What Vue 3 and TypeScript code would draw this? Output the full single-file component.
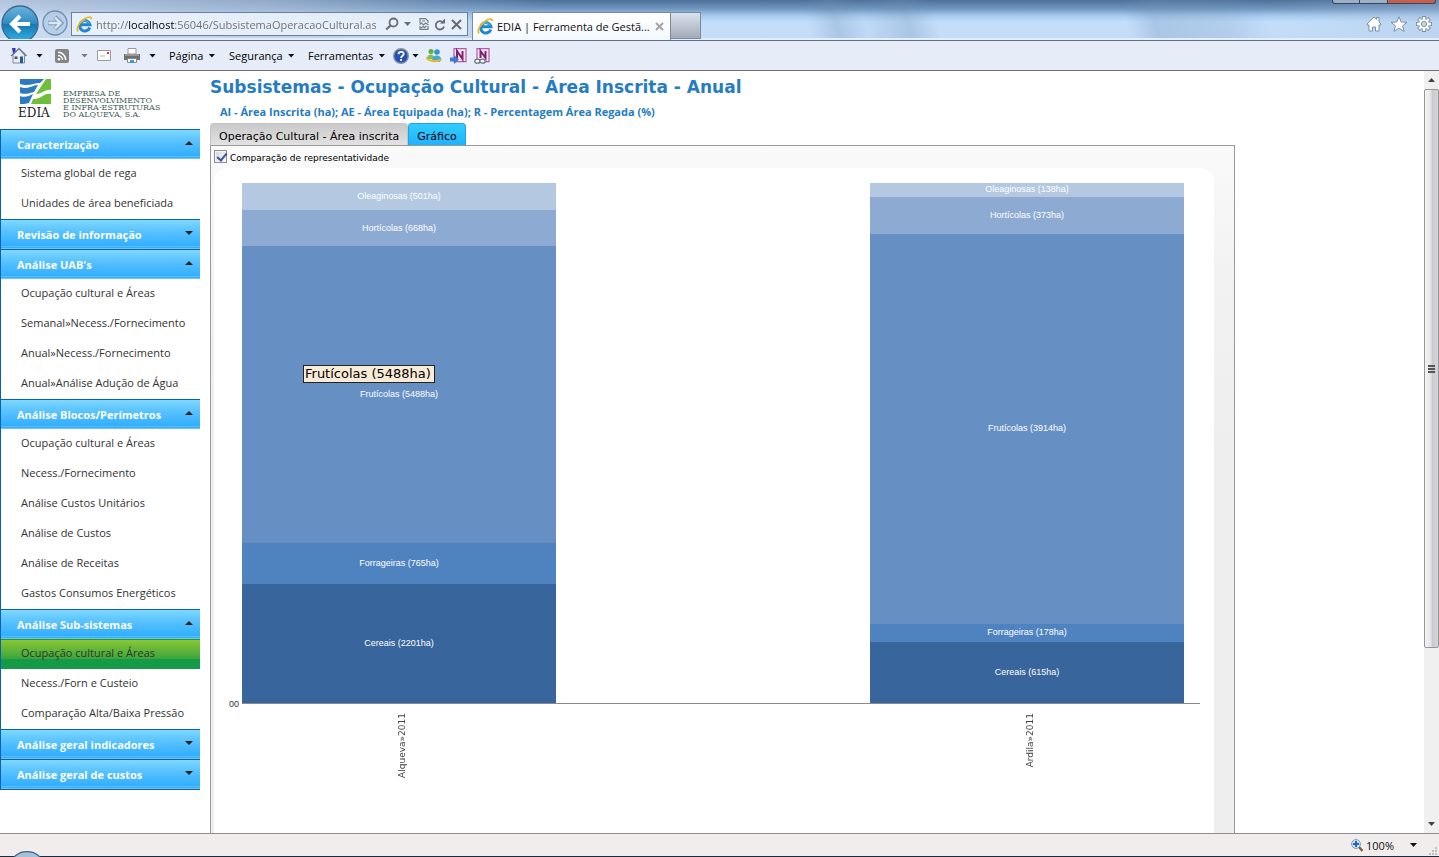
<script setup lang="ts">
import { ref } from 'vue'

interface Group { title: string; open: boolean; items: string[] }
interface Segment { name: string; area: number; tone: string }
interface Bar { label: string; segments: Segment[] }

const address = ref('http://localhost:56046/SubsistemaOperacaoCultural.aspx')
const compare = ref(true)
const activeGroup = 'Análise Sub-sistemas'
const activeItem = 'Ocupação cultural e Áreas'

const groups = ref<Group[]>([
  { title: 'Caracterização', open: true, items: ['Sistema global de rega', 'Unidades de área beneficiada'] },
  { title: 'Revisão de informação', open: false, items: [] },
  {
    title: "Análise UAB's",
    open: true,
    items: ['Ocupação cultural e Áreas', 'Semanal»Necess./Fornecimento', 'Anual»Necess./Fornecimento', 'Anual»Análise Adução de Água'],
  },
  {
    title: 'Análise Blocos/Perímetros',
    open: true,
    items: ['Ocupação cultural e Áreas', 'Necess./Fornecimento', 'Análise Custos Unitários', 'Análise de Custos', 'Análise de Receitas', 'Gastos Consumos Energéticos'],
  },
  { title: 'Análise Sub-sistemas', open: true, items: ['Ocupação cultural e Áreas', 'Necess./Forn e Custeio', 'Comparação Alta/Baixa Pressão'] },
  { title: 'Análise geral indicadores', open: false, items: [] },
  { title: 'Análise geral de custos', open: false, items: [] },
])

const crops = ['Oleaginosas', 'Hortícolas', 'Frutícolas', 'Forrageiras', 'Cereais']
const makeBar = (label: string, areas: number[]): Bar => ({
  label,
  segments: areas.map((area, i) => ({ name: crops[i], area, tone: 'tone' + i })),
})
const bars: Bar[] = [
  makeBar('Alqueva»2011', [501, 668, 5488, 765, 2201]),
  makeBar('Ardila»2011', [138, 373, 3914, 178, 615]),
]
</script>

<template>
  <div class="window">
    <header class="glass">
      <button class="back" aria-label="Retroceder">
        <svg width="38" height="38" viewBox="0 0 38 38">
          <defs>
            <linearGradient id="backFill" x1="0" y1="0" x2="0" y2="1">
              <stop offset="0" stop-color="#6fb4dc" />
              <stop offset=".48" stop-color="#2e8cc4" />
              <stop offset=".52" stop-color="#1579b5" />
              <stop offset="1" stop-color="#35b4e6" />
            </linearGradient>
          </defs>
          <circle cx="19" cy="19" r="18" fill="url(#backFill)" stroke="#3d6a90" stroke-width="1.4" />
          <path d="M29 19H11M19 11l-8 8 8 8" fill="none" stroke="#fff" stroke-width="4" />
        </svg>
      </button>
      <button class="forward" aria-label="Avançar">
        <svg width="26" height="26" viewBox="0 0 26 26">
          <circle cx="13" cy="13" r="12" fill="#b3cbe6" fill-opacity=".8" stroke="#6f8daf" stroke-width="1.3" />
          <path d="M6 13h12M13 7l6 6-6 6" fill="none" stroke="#7f9cbc" stroke-width="4.4" />
          <path d="M6.500 13h11M13 7.500l5.500 5.500-5.500 5.500" fill="none" stroke="#dce8f5" stroke-width="2.400" />
        </svg>
      </button>
      <div class="address">
        <svg class="ie" width="17" height="17" viewBox="0 0 17 17">
          <path d="M13.800 11.500A5.200 5.200 0 1 1 14 8.800H5" fill="none" stroke="#1f87cf" stroke-width="3" />
          <path d="M13 7.500A4.500 4.500 0 0 0 5 7" fill="none" stroke="#6cc4f2" stroke-width="1" />
          <path d="M2.200 15.500C-.5 13 3 6 9 2.500c3.500-2 6.500-2 6.500.8" fill="none" stroke="#f2b91d" stroke-width="1.700" />
        </svg>
        <input v-model="address" class="url" aria-label="Endereço" />
        <button class="ico" aria-label="Procurar">
          <svg width="14" height="14" viewBox="0 0 14 14"><circle cx="8.500" cy="5.500" r="4" fill="none" stroke="#6b6e73" stroke-width="1.800" /><path d="M5.500 8.500L1.200 12.500" stroke="#6b6e73" stroke-width="2.200" /></svg>
        </button>
        <button class="ico" aria-label="Opções de procura">
          <svg width="7" height="4" viewBox="0 0 7 4"><path d="M0 0h7L3.500 4z" fill="#6b6e73" /></svg>
        </button>
        <button class="ico compat" aria-label="Vista de compatibilidade">
          <svg width="10" height="12" viewBox="0 0 10 12"><path d="M1 5V.600h5.500L9 3v2M1 8v3.400h8V8M.5 6.500l2-1.500 2 2 2-2 3 2M2 10l2-1.500 1.500 1L7.500 8M3 3h3" fill="none" stroke="#7b7e83" stroke-width="1.200" /></svg>
        </button>
        <button class="ico" aria-label="Atualizar">
          <svg width="12" height="13" viewBox="0 0 12 13"><path d="M9.500 5A4.200 4.200 0 1 0 10 8.500" fill="none" stroke="#6b6e73" stroke-width="1.800" /><path d="M6 5.500h5V.5z" fill="#6b6e73" /></svg>
        </button>
        <button class="ico" aria-label="Parar">
          <svg width="11" height="11" viewBox="0 0 11 11"><path d="M1 1l9 9M10 1L1 10" stroke="#66696e" stroke-width="2" /></svg>
        </button>
      </div>
      <div class="tab">
        <svg class="ie" width="17" height="17" viewBox="0 0 17 17">
          <path d="M13.800 11.500A5.200 5.200 0 1 1 14 8.800H5" fill="none" stroke="#1f87cf" stroke-width="3" />
          <path d="M13 7.500A4.500 4.500 0 0 0 5 7" fill="none" stroke="#6cc4f2" stroke-width="1" />
          <path d="M2.200 15.500C-.5 13 3 6 9 2.500c3.500-2 6.500-2 6.500.8" fill="none" stroke="#f2b91d" stroke-width="1.700" />
        </svg>
        <span class="tabname">EDIA | Ferramenta de Gestã...</span>
        <button class="ico" aria-label="Fechar separador">
          <svg width="9" height="9" viewBox="0 0 9 9"><path d="M1 1l7 7M8 1L1 8" stroke="#a3a3a3" stroke-width="2" /></svg>
        </button>
      </div>
      <button class="newtab" aria-label="Novo separador"></button>
      <div class="tools">
        <button class="ico" aria-label="Home page">
          <svg width="16" height="16" viewBox="0 0 16 16"><path d="M1 8l7-7 2.500 2.500V1.500H13V6l2 2v1h-2v6H9.500v-4h-3v4H3V9H1z" fill="#fff" stroke="#7d8ea3" /></svg>
        </button>
        <button class="ico" aria-label="Favoritos">
          <svg width="18" height="16" viewBox="0 0 18 16"><path d="M9 .8l2.200 5.200 5.800.3-4.500 3.600 1.600 5.400L9 12.300l-5.100 3 1.600-5.400L1 6.300 6.800 6z" fill="#fff" stroke="#7d8ea3" /></svg>
        </button>
        <button class="ico" aria-label="Ferramentas do browser">
          <svg width="16" height="16" viewBox="0 0 16 16">
            <path d="M8 0v16M0 8h16M2.500 2.500l11 11M13.500 2.500l-11 11" stroke="#7d8ea3" stroke-width="4" />
            <circle cx="8" cy="8" r="5.300" fill="#fff" stroke="#7d8ea3" />
            <path d="M8 1v14M1 8h14M3.200 3.200l9.600 9.600M12.800 3.200l-9.600 9.600" stroke="#fff" stroke-width="2.400" />
            <circle cx="8" cy="8" r="2.600" fill="#c4daf2" stroke="#7d8ea3" />
          </svg>
        </button>
      </div>
      <div class="caption"><i></i><i></i><i class="close"></i></div>
    </header>

    <nav class="commands" aria-label="Barra de comandos">
      <button class="cmd wide" aria-label="Home page">
        <svg width="17" height="17" viewBox="0 0 17 17">
          <path d="M3 8l6-6 5.500 6v8H3z" fill="#e9edf2" stroke="#7a8898" />
          <path d="M1 9l8-7.500L16.500 9" fill="none" stroke="#70839a" stroke-width="1.600" />
          <path d="M2 1h3.500v3L3 6.500z" fill="#3333b8" />
          <path d="M4.500 9.500h3V12h-3z" fill="#4b5563" /><path d="M10 9.500h3V16h-3z" fill="#1f5f9e" />
        </svg>
        <i class="caret"></i>
      </button>
      <button class="cmd feed" aria-label="Feeds">
        <svg width="14" height="14" viewBox="0 0 14 14">
          <rect width="14" height="14" rx="2" fill="#858585" /><circle cx="4" cy="10.200" r="1.300" fill="#fff" />
          <path d="M3 6.500a4.500 4.500 0 0 1 4.500 4.500M3 3.300A7.700 7.700 0 0 1 10.700 11" fill="none" stroke="#fff" stroke-width="1.500" />
        </svg>
        <i class="caret dim"></i>
      </button>
      <button class="cmd" aria-label="Correio">
        <svg width="14" height="11" viewBox="0 0 14 11"><path d="M.5.5h13v10H.5z" fill="#fbfbfb" stroke="#9a9a9a" /><path d="M10 2h2v2h-2z" fill="#d8333b" /><path d="M3 6h5" stroke="#bbb" /></svg>
      </button>
      <button class="cmd wide" aria-label="Imprimir">
        <svg width="16" height="16" viewBox="0 0 16 16">
          <path d="M4 .5h8V6H4z" fill="#fff" stroke="#999" /><path d="M0 6h16v6H0z" fill="#6f6f6f" /><path d="M1 6h14v2H1z" fill="#999" />
          <path d="M3.500 10.500h9v4h-9z" fill="#fff" stroke="#888" /><path d="M6 12h4v3H6z" fill="#3e9bd8" />
        </svg>
        <i class="caret"></i>
      </button>
      <button class="cmd text">Página<i class="caret"></i></button>
      <button class="cmd text">Segurança<i class="caret"></i></button>
      <button class="cmd text">Ferramentas<i class="caret"></i></button>
      <button class="cmd help" aria-label="Ajuda">
        <svg width="16" height="16" viewBox="0 0 16 16">
          <circle cx="8" cy="8" r="7.300" fill="#2450b4" stroke="#8c929c" stroke-width="1.400" />
          <path d="M5.500 6.200C5.500 3 10.700 3 10.700 6c0 1.800-2.600 1.900-2.600 4M8.100 11v2" fill="none" stroke="#fff" stroke-width="1.800" />
        </svg>
        <i class="caret"></i>
      </button>
      <button class="cmd" aria-label="Messenger">
        <svg width="16" height="15" viewBox="0 0 16 15">
          <circle cx="5" cy="3.500" r="2.500" fill="#5fae43" /><circle cx="11" cy="4" r="2.800" fill="#3596c9" />
          <path d="M1 11c0-6 7-6 8 0z" fill="#7cc254" /><path d="M6 13c0-7 9-7 9.500-1l-2 2z" fill="#45a7d6" />
          <path d="M0 9c4 3.500 9 4 15 1.500v2C9 15.500 4 14 0 11z" fill="#e9b62c" />
        </svg>
      </button>
      <button class="cmd" aria-label="Enviar para o OneNote">
        <svg width="17" height="16" viewBox="0 0 17 16">
          <path d="M4 .7h12v13H4z" fill="#f8e9f6" stroke="#b35aa9" stroke-width="1.200" />
          <path d="M7 11V3l5.500 8V3" fill="none" stroke="#7d2272" stroke-width="2" />
          <path d="M0 9.500h4V7l5 4.500L4 16v-2.500H0z" fill="#3f79d0" />
        </svg>
      </button>
      <button class="cmd" aria-label="Notas ligadas do OneNote">
        <svg width="17" height="16" viewBox="0 0 17 16">
          <path d="M3 .7h12v13H3z" fill="#f8e9f6" stroke="#b35aa9" stroke-width="1.200" />
          <path d="M6.500 10V3l5 7V3" fill="none" stroke="#7d2272" stroke-width="2" />
          <ellipse cx="3.500" cy="13.200" rx="2.700" ry="2" fill="#fff" stroke="#5c6c80" stroke-width="1.200" />
          <ellipse cx="8.500" cy="13.200" rx="2.700" ry="2" fill="#fff" stroke="#5c6c80" stroke-width="1.200" />
        </svg>
      </button>
    </nav>

    <div class="page">
      <aside class="side">
        <svg class="logo" width="200" height="58" viewBox="0 0 200 58" role="img" aria-label="EDIA">
          <path d="M20 8h24l-4 4c-7 0-11 4-20 1z" fill="#2c7bc0" />
          <path d="M20 16c9 3 12-2 18-2l-4 7c-5 1-8 3-14 1z" fill="#2c7bc0" />
          <path d="M20 25c5 2 9 0 13-2l-4 9c-3 1-6 1-9 1z" fill="#2c7bc0" />
          <path d="M46 8h5v11c-6-1-8 4-15 4z" fill="#6fbf3c" />
          <path d="M51 23v10H31l2-5c9 0 11-7 18-5z" fill="#6fbf3c" />
          <text x="18" y="46" class="brand">EDIA</text>
          <text x="63" y="25" class="firm">EMPRESA DE</text>
          <text x="63" y="32" class="firm">DESENVOLVIMENTO</text>
          <text x="63" y="39" class="firm">E INFRA-ESTRUTURAS</text>
          <text x="63" y="46" class="firm">DO ALQUEVA, S.A.</text>
        </svg>
        <nav class="menu">
          <template v-for="group in groups" :key="group.title">
            <button class="group" :aria-expanded="group.open" @click="group.open = !group.open">
              {{ group.title }}<i class="tri" :class="{ up: group.open }"></i>
            </button>
            <template v-if="group.open">
              <a
                v-for="item in group.items"
                :key="item"
                href="#"
                class="item"
                :class="{ active: group.title === activeGroup && item === activeItem }"
              >{{ item }}</a>
            </template>
          </template>
        </nav>
      </aside>

      <main class="main">
        <h1>Subsistemas - Ocupação Cultural - Área Inscrita - Anual</h1>
        <p class="legend">AI - Área Inscrita (ha); AE - Área Equipada (ha); R - Percentagem Área Regada (%)</p>
        <div class="tabs" role="tablist">
          <button class="viewtab" role="tab">Operação Cultural - Área inscrita</button>
          <button class="viewtab on" role="tab" aria-selected="true">Gráfico</button>
        </div>
        <section class="panel">
          <label class="check"><input v-model="compare" type="checkbox" />Comparação de representatividade</label>
          <div class="chart">
            <span class="zero">00</span>
            <div class="plot">
              <div v-for="bar in bars" :key="bar.label" class="bar">
                <div v-for="s in bar.segments" :key="s.name" class="seg" :class="s.tone" :style="{ flexGrow: s.area }">
                  {{ s.name }} ({{ s.area }}ha)
                </div>
              </div>
              <div class="tip">Frutícolas (5488ha)</div>
            </div>
            <div class="ticks">
              <div v-for="bar in bars" :key="bar.label" class="tick"><span>{{ bar.label }}</span></div>
            </div>
          </div>
        </section>
      </main>

      <div class="scroll">
        <svg class="arrow" width="7" height="4" viewBox="0 0 7 4"><path d="M0 4h7L3.500 0z" fill="#444" /></svg>
        <div class="rail"><div class="thumb"><i></i><i></i><i></i></div></div>
        <svg class="arrow" width="7" height="4" viewBox="0 0 7 4"><path d="M0 0h7L3.500 4z" fill="#444" /></svg>
      </div>
    </div>

    <footer class="status">
      <svg class="orb" width="30" height="6" viewBox="0 0 30 6"><ellipse cx="15" cy="12" rx="15" ry="11.400" fill="#a9bfd2" stroke="#33658c" stroke-width="1.200" /></svg>
      <button class="zoom">
        <svg width="12" height="13" viewBox="0 0 12 13">
          <path d="M8 8l3.500 4" stroke="#8f5a32" stroke-width="2.400" /><circle cx="5" cy="5" r="4.400" fill="#d5e8fa" stroke="#7d93ad" />
          <path d="M5 2v6M2 5h6" stroke="#1468c8" stroke-width="2" />
        </svg>
        <span>100%</span><i class="caret"></i>
      </button>
      <svg class="grip" width="9" height="9" viewBox="0 0 9 9"><path d="M6 0h2v2H6zM3 3h2v2H3zM6 3h2v2H6zM0 6h2v2H0zM3 6h2v2H3zM6 6h2v2H6z" fill="#bdbdc2" /></svg>
    </footer>
  </div>
</template>

<style>
html, body { margin: 0; background: #fff; }
</style>

<style scoped>
* { box-sizing: border-box; }
button { border: 0; padding: 0; margin: 0; background: none; font: inherit; color: inherit; cursor: pointer; }
svg { display: block; flex: none; }
.window {
  display: flex; flex-direction: column; height: 100vh; overflow: hidden;
  font-family: "Open Sans", "Noto Sans", sans-serif; font-size: 11px; color: #222;
}

.glass {
  position: relative; flex: none; display: flex; align-items: flex-start; height: 41px; padding: 5px 7px 0 1px;
  border-bottom: 1px solid #5f6f86;
  background:
    linear-gradient(#fff0 38px, #e4eefb 38px),
    linear-gradient(90deg, rgba(205, 218, 238, .8), rgba(185, 203, 228, .6) 20%, rgba(160, 190, 222, .2) 33%, rgba(190, 210, 235, 0) 38%),
    linear-gradient(75deg, #fff0 56%, rgba(110, 145, 185, .3) 58%, rgba(110, 145, 185, .05) 60%, rgba(110, 145, 185, .3) 63%, #fff0 65%, #fff0 78%, rgba(110, 145, 185, .3) 80%, rgba(110, 145, 185, .2) 85%, #fff0 88%, rgba(170, 190, 215, .3)),
    linear-gradient(#4c7099, #7298c0 9px, #a9cbee 16px, #c2defb 22px, #c5dcf7 38px);
}
.back { height: 34px; overflow: hidden; }
.forward { margin: 5px 3px 0 3px; }
.address {
  display: flex; align-items: center; width: 397px; height: 24px; margin-top: 7px; padding: 0 5px 0 4px;
  border: 1px solid #6e7f96; background: rgba(240, 246, 253, .8);
}
.url {
  flex: 1; min-width: 0; margin: 0 4px 0 3px; padding: 0; border: 0; outline: 0; font: inherit; color: transparent;
  background: linear-gradient(90deg, #6d6d6d 33px, #000 33px, #000 79px, #6d6d6d 79px) text;
}
.ico { flex: none; }
.address .ico { margin-left: 5px; }
.address .compat { margin-left: 8px; }
.tab {
  display: flex; align-items: center; width: 199px; height: 28px; margin: 7px 0 0 4px; padding: 0 6px 0 4px;
  border: 1px solid #7b8a9e; border-bottom: 0; background: linear-gradient(#fff, #f4f8fd);
}
.tabname { flex: 1; margin-left: 3px; color: #111; white-space: nowrap; }
.newtab { width: 30px; height: 27px; margin-top: 7px; border: 1px solid #7b8a9e; border-left: 0; background: linear-gradient(#d9e3ee, #a3abb7); }
.tools { display: flex; gap: 8px; margin: 11px 0 0 auto; }
.caption { position: absolute; right: 3px; top: 0; display: flex; }
.caption i { width: 28px; height: 4px; border: 1px solid #34475f; border-top: 0; background: #9cb0c8; border-radius: 0 0 0 3px; }
.caption i + i { border-left: 0; border-radius: 0; }
.caption .close { width: 48px; background: #c75f4c; border-radius: 0 0 3px 0; }

.commands {
  flex: none; display: grid; grid-template-columns: 45px 42px 27px 45px 60px 79px 85px 33px 24px 24px 24px;
  align-items: center; height: 30px; padding-left: 10px; border-bottom: 1px solid #6e6e73; background: #e6edf9; color: #000;
}
.cmd { display: flex; align-items: center; gap: 3px; white-space: nowrap; }
.wide { gap: 9px; }
.feed { gap: 12px; }
.text { gap: 5px; }
.caret { flex: none; width: 7px; height: 4px; background: #111; clip-path: polygon(0 0, 100% 0, 50% 100%); }
.dim { background: #777; }

.page { flex: 1; min-height: 0; display: flex; overflow: hidden; }
.side { flex: none; width: 200px; }
.brand { font: 12px "DejaVu Serif", serif; fill: #222; }
.firm { font: 8px "DejaVu Serif", serif; fill: #3d5a55; }
.menu { border-left: 1px solid #0a62a9; border-bottom: 1px solid #0a62a9; }
.group {
  display: flex; align-items: center; justify-content: space-between; width: 100%; height: 30px; padding: 0 7px 1px 16px;
  border-top: 1px solid #0a62a9; font-weight: bold; color: #fff;
  background: linear-gradient(#7fd8ff, #5cc4ff 35%, #33aeff 88%, #66ccff 89%, #2fa8fb 96%, #a5d4f5);
}
.tri { width: 8px; height: 4px; margin-bottom: 2px; background: #222; clip-path: polygon(0 0, 100% 0, 50% 100%); }
.up { clip-path: polygon(50% 0, 100% 100%, 0 100%); }
.item { display: block; height: 30px; padding-left: 20px; line-height: 28px; color: #333; text-decoration: none; white-space: nowrap; background: #fff; }
.active { background: linear-gradient(#1c9a3a 1px, #8ac733 1px, #3ba53d 20px, #159a47 20px); }

.main { flex: 1; min-width: 0; display: flex; flex-direction: column; padding: 0 189px 0 10px; font-family: "DejaVu Sans", sans-serif; }
h1 { margin: 5px 0 0; font-size: 17px; line-height: 22px; color: #267cc2; white-space: nowrap; }
.legend { margin: 7px 0 0 10px; font: bold 11px/14px "Open Sans", sans-serif; color: #267cc2; white-space: nowrap; }
.tabs { flex: none; display: flex; height: 22px; margin-top: 4px; }
.viewtab { padding: 3px 8px 0; border: 1px solid #c4c4c4; border-bottom: 0; border-radius: 4px 4px 0 0; font-size: 11px; color: #000; background: linear-gradient(#c9c9c9, #e2e2e2); white-space: nowrap; }
.on { border-color: #1aa3f0; background: linear-gradient(#33ccff, #1fb2ff); }
.panel { flex: 1 0 auto; padding: 2px 20px 0 3px; border: 1px solid #999; border-bottom: 0; background: linear-gradient(#fafafa, #f2f2f2 130px, #eee 300px); }
.check { display: flex; align-items: center; height: 20px; font-size: 9px; color: #000; }
.check input {
  appearance: none; flex: none; width: 13px; height: 13px; margin: 0 3px 4px 0; border: 1px solid #8e8f8f;
  background: linear-gradient(135deg, #cfd6e0, #fff); outline: 1px solid #f4f4f4; outline-offset: -2px;
}
.check input:checked::before { content: ""; display: block; width: 4px; height: 8px; margin: 0 0 0 4px; border: solid #3f5596; border-width: 0 2px 2px 0; transform: rotate(40deg); }
.chart { position: relative; min-height: 700px; padding: 15px 14px 0 28px; border-radius: 14px 14px 0 0; background: #fff; }
.plot, .ticks { display: grid; grid-template-columns: repeat(3, 1fr); padding-right: 16px; }
.plot { position: relative; height: 521px; border-bottom: 1px solid #8a8a8a; }
.bar { display: flex; flex-direction: column; min-width: 0; }
.bar:nth-child(2), .tick:nth-child(2) { grid-column: 3; }
.seg { display: flex; flex: 1 1 0; min-height: 0; align-items: center; justify-content: center; font: 9px/11px "Liberation Sans", sans-serif; color: #fff; }
.tone0 { background: #b4c8e1; }
.tone1 { background: #8dabd2; }
.tone2 { background: #668fc3; }
.tone3 { background: #4f83bf; }
.tone4 { background: #38659b; }
.tip { position: absolute; left: 61px; top: 182px; padding: 0 3px 0 1px; border: 1px solid #222; background: #faebd7; font-size: 13px; line-height: 16px; color: #000; white-space: nowrap; }
.zero { position: absolute; left: 15px; top: 530px; font: 9px/12px "Liberation Sans", sans-serif; color: #333; }
.ticks { padding-top: 9px; }
.tick { display: flex; align-items: flex-start; justify-content: center; padding-left: 6px; }
.tick span { writing-mode: vertical-rl; transform: rotate(180deg); font-size: 9px; line-height: 12px; color: #444; }

.scroll { flex: none; display: flex; flex-direction: column; align-items: center; width: 15px; padding: 7px 0; background: #f0f0f0; }
.rail { flex: 1; width: 100%; padding: 7px 0; }
.thumb {
  display: flex; flex-direction: column; align-items: center; justify-content: center; gap: 1px; height: 77%;
  border: 1px solid #969696; border-radius: 2px; background: linear-gradient(90deg, #f5f5f5, #e4e4e6 45%, #c9c9ce 55%, #d6d6da);
}
.thumb i { width: 7px; height: 2px; background: #555; }

.status { position: relative; flex: none; display: flex; align-items: center; justify-content: flex-end; gap: 12px; height: 24px; padding-right: 1px; border-top: 1px solid #8f8d90; border-bottom: 1px solid #1b2b3c; background: #f1edec; }
.orb { position: absolute; left: 12px; bottom: -1px; }
.zoom { display: flex; align-items: center; gap: 3px; color: #111; }
.zoom .caret { margin-left: 13px; }
.grip { align-self: flex-end; }
</style>
